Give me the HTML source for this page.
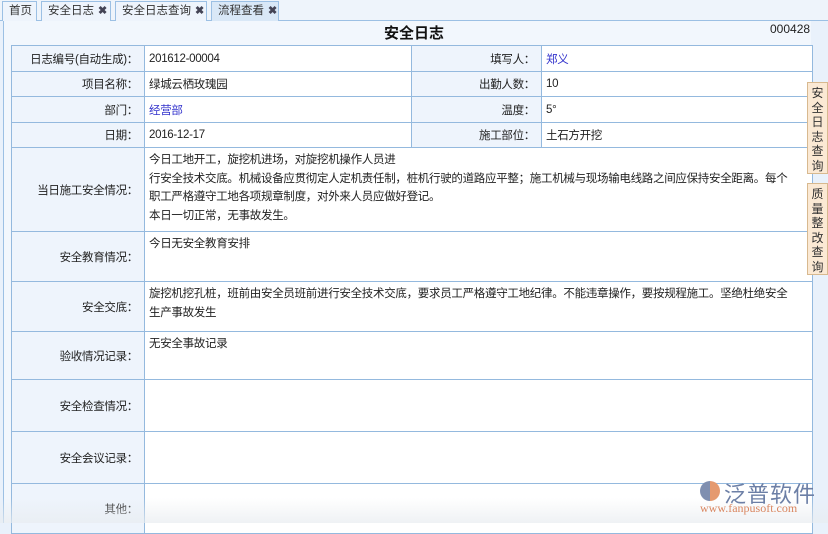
<!DOCTYPE html>
<html><head><meta charset="utf-8"><style>
*{margin:0;padding:0;box-sizing:border-box}
body{width:828px;height:523px;overflow:hidden;background:#e9f1fb;font-family:"Liberation Sans","Noto Sans CJK SC",sans-serif;font-size:12px;color:#222;position:relative}
.tabs{position:absolute;left:0;top:0;height:21px;width:828px;background:#eef4fb;border-bottom:1px solid #9cc0e4}
.tab{position:absolute;top:1px;height:20px;border:1px solid #9cc0e4;border-bottom:none;background:#eef4fc;color:#333;font-size:11.5px;line-height:18px;padding-left:6px;white-space:nowrap;overflow:hidden}
.tab b{font-size:11px;color:#445;margin-left:4px}
.main{position:absolute;left:3px;top:21px;width:808px;height:502px;background:#f2f7fd;border-left:1px solid #9cc0e4}
h1{position:absolute;left:0;width:828px;top:22px;text-align:center;font-size:15px;font-weight:bold;color:#111}
.no{position:absolute;left:770px;top:22px;font-size:12px}
table{position:absolute;left:11px;top:45px;width:801px;border-collapse:collapse;table-layout:fixed}
td{border:1px solid #94b9de;padding:0 4px;vertical-align:middle;background:#fff;white-space:nowrap;overflow:hidden;font-size:11.5px;letter-spacing:-0.3px}
td.l{background:#eef4fc;text-align:right;padding-right:6px}
td.t{vertical-align:top;padding-top:3px;line-height:18.5px}
.blue{color:#3333cc}
.side{position:absolute;left:807px;width:21px;background:#fbe9d4;border:1px solid #d8b98f;font-size:12px;line-height:14.5px;text-align:center;color:#333;padding-top:3px;overflow:hidden}
</style></head><body>
<div class="tabs">
<div class="tab" style="left:2px;width:35px">首页</div>
<div class="tab" style="left:41px;width:70px">安全日志<b>✖</b></div>
<div class="tab" style="left:115px;width:92px">安全日志查询<b>✖</b></div>
<div class="tab" style="left:211px;width:68px;background:#d9e8f7">流程查看<b>✖</b></div>
</div>
<div class="main"></div>
<h1>安全日志</h1><div class="no">000428</div>
<table>
<colgroup><col style="width:133px"><col style="width:267px"><col style="width:130px"><col style="width:271px"></colgroup>
<tr style="height:26px"><td class="l">日志编号(自动生成)：</td><td>201612-00004</td><td class="l">填写人：</td><td class="blue">郑义</td></tr>
<tr style="height:25px"><td class="l">项目名称：</td><td>绿城云栖玫瑰园</td><td class="l">出勤人数：</td><td>10</td></tr>
<tr style="height:26px"><td class="l">部门：</td><td class="blue">经营部</td><td class="l">温度：</td><td>5°</td></tr>
<tr style="height:25px"><td class="l">日期：</td><td>2016-12-17</td><td class="l">施工部位：</td><td>土石方开挖</td></tr>
<tr style="height:84px"><td class="l">当日施工安全情况：</td><td colspan="3" class="t">今日工地开工，旋挖机进场，对旋挖机操作人员进<br>行安全技术交底。机械设备应贯彻定人定机责任制，桩机行驶的道路应平整；施工机械与现场输电线路之间应保持安全距离。每个<br>职工严格遵守工地各项规章制度，对外来人员应做好登记。<br>本日一切正常，无事故发生。</td></tr>
<tr style="height:50px"><td class="l">安全教育情况：</td><td colspan="3" class="t">今日无安全教育安排</td></tr>
<tr style="height:50px"><td class="l">安全交底：</td><td colspan="3" class="t">旋挖机挖孔桩，班前由安全员班前进行安全技术交底，要求员工严格遵守工地纪律。不能违章操作，要按规程施工。坚绝杜绝安全<br>生产事故发生</td></tr>
<tr style="height:48px"><td class="l">验收情况记录：</td><td colspan="3" class="t">无安全事故记录</td></tr>
<tr style="height:52px"><td class="l">安全检查情况：</td><td colspan="3"></td></tr>
<tr style="height:52px"><td class="l">安全会议记录：</td><td colspan="3"></td></tr>
<tr style="height:50px"><td class="l">其他：</td><td colspan="3"></td></tr>
</table>
<div class="side" style="top:82px;height:92px">安<br>全<br>日<br>志<br>查<br>询</div>
<div class="side" style="top:183px;height:92px">质<br>量<br>整<br>改<br>查<br>询</div>
<div style="position:absolute;left:0;top:498px;width:828px;height:25px;background:linear-gradient(rgba(232,236,240,0),rgba(232,236,240,0.7))"></div>
<div style="position:absolute;left:700px;top:481px;width:20px;height:20px;border-radius:50%;background:linear-gradient(90deg,#7f8fb0 50%,#e59a70 50%)"></div>
<div style="position:absolute;left:724px;top:477px;font-size:22px;color:#6c7fa6;letter-spacing:1px">泛普软件</div>
<div style="position:absolute;left:700px;top:501px;font-size:12px;color:#d98660;font-family:'Liberation Serif',serif">www.fanpusoft.com</div>
</body></html>
